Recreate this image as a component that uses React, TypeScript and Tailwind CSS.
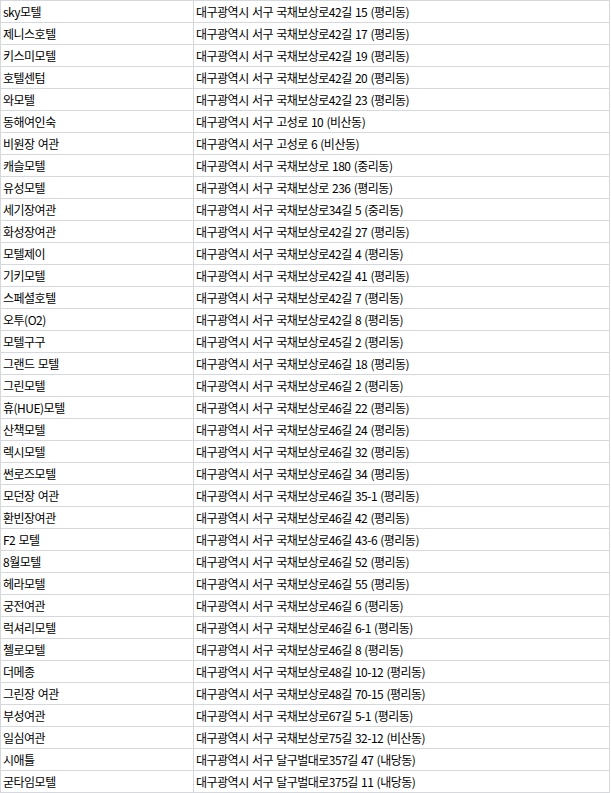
const rows: [string, string][] = [
  ['sky모텔', '대구광역시 서구 국채보상로42길 15 (평리동)'],
  ['제니스호텔', '대구광역시 서구 국채보상로42길 17 (평리동)'],
  ['키스미모텔', '대구광역시 서구 국채보상로42길 19 (평리동)'],
  ['호텔센텀', '대구광역시 서구 국채보상로42길 20 (평리동)'],
  ['와모텔', '대구광역시 서구 국채보상로42길 23 (평리동)'],
  ['동해여인숙', '대구광역시 서구 고성로 10 (비산동)'],
  ['비원장 여관', '대구광역시 서구 고성로 6 (비산동)'],
  ['캐슬모텔', '대구광역시 서구 국채보상로 180 (중리동)'],
  ['유성모텔', '대구광역시 서구 국채보상로 236 (평리동)'],
  ['세기장여관', '대구광역시 서구 국채보상로34길 5 (중리동)'],
  ['화성장여관', '대구광역시 서구 국채보상로42길 27 (평리동)'],
  ['모텔제이', '대구광역시 서구 국채보상로42길 4 (평리동)'],
  ['기키모텔', '대구광역시 서구 국채보상로42길 41 (평리동)'],
  ['스페셜호텔', '대구광역시 서구 국채보상로42길 7 (평리동)'],
  ['오투(O2)', '대구광역시 서구 국채보상로42길 8 (평리동)'],
  ['모텔구구', '대구광역시 서구 국채보상로45길 2 (평리동)'],
  ['그랜드 모텔', '대구광역시 서구 국채보상로46길 18 (평리동)'],
  ['그린모텔', '대구광역시 서구 국채보상로46길 2 (평리동)'],
  ['휴(HUE)모텔', '대구광역시 서구 국채보상로46길 22 (평리동)'],
  ['산책모텔', '대구광역시 서구 국채보상로46길 24 (평리동)'],
  ['렉시모텔', '대구광역시 서구 국채보상로46길 32 (평리동)'],
  ['썬로즈모텔', '대구광역시 서구 국채보상로46길 34 (평리동)'],
  ['모던장 여관', '대구광역시 서구 국채보상로46길 35-1 (평리동)'],
  ['환빈장여관', '대구광역시 서구 국채보상로46길 42 (평리동)'],
  ['F2 모텔', '대구광역시 서구 국채보상로46길 43-6 (평리동)'],
  ['8월모텔', '대구광역시 서구 국채보상로46길 52 (평리동)'],
  ['헤라모텔', '대구광역시 서구 국채보상로46길 55 (평리동)'],
  ['궁전여관', '대구광역시 서구 국채보상로46길 6 (평리동)'],
  ['럭셔리모텔', '대구광역시 서구 국채보상로46길 6-1 (평리동)'],
  ['첼로모텔', '대구광역시 서구 국채보상로46길 8 (평리동)'],
  ['더메종', '대구광역시 서구 국채보상로48길 10-12 (평리동)'],
  ['그린장 여관', '대구광역시 서구 국채보상로48길 70-15 (평리동)'],
  ['부성여관', '대구광역시 서구 국채보상로67길 5-1 (평리동)'],
  ['일심여관', '대구광역시 서구 국채보상로75길 32-12 (비산동)'],
  ['시애틀', '대구광역시 서구 달구벌대로357길 47 (내당동)'],
  ['굳타임모텔', '대구광역시 서구 달구벌대로375길 11 (내당동)'],
];

export default function App() {
  return (
    <div className="min-h-[793px] w-[611px] bg-white font-['Noto_Sans_CJK_KR',sans-serif] text-[12px] tracking-[-0.5px] [word-spacing:1px] text-black">
      <div className="grid w-[610px] grid-cols-[193px_416px] border-t border-l border-[#d5d8dc]">
        {rows.map(([name, addr]) => (
          <div key={name} className="contents">
            <div className="flex h-[22px] items-center whitespace-nowrap border-r border-b border-[#d5d8dc] pl-[2px] leading-none">
              {name}
            </div>
            <div className="flex h-[22px] items-center whitespace-nowrap border-r border-b border-[#d5d8dc] pl-[2px] leading-none">
              {addr}
            </div>
          </div>
        ))}
      </div>
    </div>
  );
}
